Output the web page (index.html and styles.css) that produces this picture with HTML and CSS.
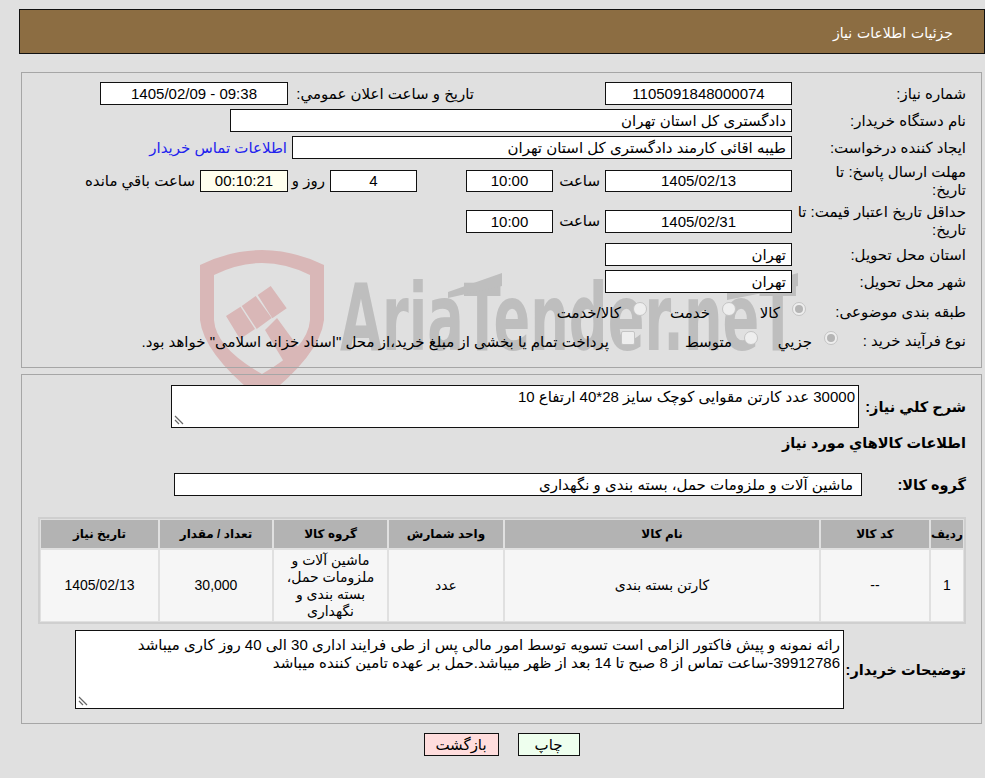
FILE: index.html
```html
<!DOCTYPE html>
<html lang="fa" dir="rtl">
<head>
<meta charset="utf-8">
<title>جزئیات اطلاعات نیاز</title>
<link rel="stylesheet" href="styles.css">
</head>
<body>
<div class="watermark" aria-hidden="true">
  <svg width="640" height="190" viewBox="190 240 640 190">
    <path class="shield" fill-rule="evenodd" d="M200 265 Q262 235 324 265 L324 320 Q320 355 262 400 Q204 355 200 320Z M214 275 Q262 251 310 275 L310 320 Q308 348 262 374 Q216 348 214 320Z"/>
    <path class="shield" d="M226 316 L240.500 306.700 L255 329 L240 339Z M241.700 306 L255.700 296 L271.700 318 L256.700 329Z M257.700 295 L270.700 286 L286.700 308.300 L272.300 318.300Z"/>
    <path class="shield" d="M265 330 L277 318 L304 355 L290 372Z"/>
    <text class="mark" transform="translate(340 350) scale(0.589 1)">AriaTender.neT</text>
    <path class="mark-bar" d="M448 292 L502 273 L502 286 L448 298Z M727 293 L798 273 L798 286 L727 300Z"/>
  </svg>
</div>
<header class="title-bar">جزئیات اطلاعات نیاز</header>
<section class="panel panel-info">
  <div class="row r1">
    <div class="label">شماره نیاز:</div>
    <div class="box w-date">1105091848000074</div>
    <div class="mid">تاریخ و ساعت اعلان عمومي:</div>
    <div class="box w-date2">09:38 - 1405/02/09</div>
  </div>
  <div class="row r1">
    <div class="label">نام دستگاه خریدار:</div>
    <div class="box start w-buyer">دادگستری کل استان تهران</div>
  </div>
  <div class="row r1">
    <div class="label">ایجاد کننده درخواست:</div>
    <div class="box start w-creator">طیبه اقائی کارمند دادگستری کل استان تهران</div>
    <a class="contact" href="#">اطلاعات تماس خریدار</a>
  </div>
  <div class="row r2 first-tall">
    <div class="label">مهلت ارسال پاسخ: تا<br>تاریخ:</div>
    <div class="box w-date h22">1405/02/13</div>
    <div class="unit">ساعت</div>
    <div class="box w-time h22">10:00</div>
    <div class="box w-day h22">4</div>
    <div class="unit-day">روز و</div>
    <div class="box w-timer h22 timer">00:10:21</div>
    <div class="unit-left">ساعت باقي مانده</div>
  </div>
  <div class="row r2">
    <div class="label">حداقل تاریخ اعتبار قیمت: تا<br>تاریخ:</div>
    <div class="box w-date">1405/02/31</div>
    <div class="unit">ساعت</div>
    <div class="box w-time">10:00</div>
  </div>
  <div class="row r1 after-tall">
    <div class="label">استان محل تحویل:</div>
    <div class="box start w-date">تهران</div>
  </div>
  <div class="row r1">
    <div class="label">شهر محل تحویل:</div>
    <div class="box start w-date">تهران</div>
  </div>
  <div class="row r3 r3-first">
    <div class="label l-subject">طبقه بندی موضوعی:</div>
    <span class="radio on"></span><span class="opt o-a">کالا</span>
    <span class="radio"></span><span class="opt o-b">خدمت</span>
    <span class="radio"></span><span class="opt">کالا/خدمت</span>
  </div>
  <div class="row r3">
    <div class="label l-process">نوع فرآیند خرید :</div>
    <span class="radio on"></span><span class="opt o-d">جزيي</span>
    <span class="radio"></span><span class="opt o-e">متوسط</span>
    <span class="check"></span><span class="opt">پرداخت تمام یا بخشی از مبلغ خرید،از محل "اسناد خزانه اسلامی" خواهد بود.</span>
  </div>
</section>
<section class="panel panel-items">
  <div class="row desc">
    <div class="label-b w-desc">شرح کلي نیاز:</div>
    <div class="area a-desc">30000 عدد کارتن مقوایی کوچک سایز 28*40 ارتفاع 10<svg class="grip" width="10" height="10" viewBox="0 0 10 10"><path d="M1 1 9 9M1 5 5 9" stroke="#666" stroke-width="1.2" fill="none"/></svg></div>
  </div>
  <h2 class="heading">اطلاعات کالاهاي مورد نیاز</h2>
  <div class="row group">
    <div class="label-b w-group">گروه کالا:</div>
    <div class="box start a-group">ماشین آلات و ملزومات حمل، بسته بندی و نگهداری</div>
  </div>
  <table class="items">
    <colgroup><col class="c1"><col class="c2"><col class="c3"><col class="c4"><col class="c5"><col class="c6"><col class="c7"></colgroup>
    <thead>
      <tr><th>ردیف</th><th>کد کالا</th><th>نام کالا</th><th>واحد شمارش</th><th>گروه کالا</th><th>تعداد / مقدار</th><th>تاریخ نیاز</th></tr>
    </thead>
    <tbody>
      <tr><td>1</td><td>--</td><td>کارتن بسته بندی</td><td>عدد</td><td>ماشین آلات و ملزومات حمل، بسته بندی و نگهداری</td><td>30,000</td><td>1405/02/13</td></tr>
    </tbody>
  </table>
  <div class="row notes">
    <div class="label-b w-notes">توضیحات خریدار:</div>
    <div class="area a-notes">رائه نمونه و پیش فاکتور الزامی است تسویه توسط امور مالی پس از طی فرایند اداری 30 الی 40 روز کاری میباشد<br>39912786-ساعت تماس از 8 صبح تا 14 بعد از ظهر میباشد.حمل بر عهده تامین کننده میباشد<svg class="grip" width="10" height="10" viewBox="0 0 10 10"><path d="M1 1 9 9M1 5 5 9" stroke="#666" stroke-width="1.2" fill="none"/></svg></div>
  </div>
</section>
<div class="actions">
  <button class="btn print" type="button">چاپ</button>
  <button class="btn back" type="button">بازگشت</button>
</div>
</body>
</html>
```
FILE: styles.css
```css
* { box-sizing: border-box; }
html, body { margin: 0; padding: 0; }
body {
  position: relative;
  width: 985px;
  height: 778px;
  overflow: hidden;
  background: #e0e0e0;
  color: #000;
  font: 15px/18px "Liberation Sans", "DejaVu Sans", sans-serif;
  direction: rtl;
}
.watermark { position: absolute; left: 190px; top: 240px; z-index: 0; }
.shield { fill: #d9b7b7; }
.mark { font: bold 92px "DejaVu Sans", sans-serif; fill: #bebebe; direction: ltr; unicode-bidi: bidi-override; text-anchor: start; }
.mark-bar { fill: #bebebe; }
.title-bar {
  position: relative;
  margin: 9px 0 0 19px;
  height: 45px;
  padding: 14px 31px 0 0;
  background: #8c6d42;
  border: 1px solid #111;
  color: #fff;
  font-size: 14px;
  word-spacing: 1px;
}
.panel {
  position: relative;
  margin: 0 3px 0 21px;
  border: 1px solid #a6a6a6;
  padding-right: 15px;
  padding-left: 15px;
}
.panel-info { margin-top: 18px; height: 296px; padding-top: 9px; }
.panel-items { margin-top: 6px; height: 350px; padding-top: 10px; }
.row { display: flex; align-items: center; }
.r1 { height: 23px; margin-bottom: 4px; }
.r2 { min-height: 38px; margin-bottom: 2px; }
.r3 { height: 29px; }
.r3-first { margin-top: 4px; }
.first-tall { margin-top: -1px; }
.after-tall { margin-top: 3px; }
.label { width: 174px; flex: none; }
.l-subject { width: 160px; }
.l-process { width: 128px; }
.box {
  background: #fff;
  border: 1px solid #111;
  height: 23px;
  line-height: 21px;
  text-align: center;
  flex: none;
  white-space: nowrap;
}
.h22 { height: 22px; line-height: 20px; }
.start { text-align: right; padding-right: 5px; }
.w-date { width: 187px; }
.w-date2 { width: 188px; }
.w-buyer { width: 562px; }
.w-creator { width: 500px; }
.w-time { width: 87px; }
.w-day { width: 87px; margin-right: 49px; }
.w-timer { width: 88px; }
.timer { background: #ffffee; }
.mid { width: 317px; padding-right: 131px; white-space: nowrap; }
.contact { margin-right: 5px; color: #2222ee; text-decoration: none; white-space: nowrap; }
.unit { width: 52px; padding-right: 5px; white-space: nowrap; }
.unit-day { width: 42px; padding-right: 5px; white-space: nowrap; }
.unit-left { padding-right: 5px; white-space: nowrap; }
.radio {
  flex: none;
  width: 14px;
  height: 14px;
  border-radius: 50%;
  border: 1px solid #c4c4c4;
  background: #eee;
  position: relative;
  margin-top: -6px;
}
.radio.on::after {
  content: "";
  position: absolute;
  left: 2px;
  top: 2px;
  width: 8px;
  height: 8px;
  border-radius: 50%;
  background: #b5b5b5;
}
.check {
  flex: none;
  width: 14px;
  height: 14px;
  background: #eee;
  border: 1px solid #c4c4c4;
  border-radius: 2px;
  margin-top: -6px;
}
.opt { margin-right: 12px; margin-top: 2px; white-space: nowrap; position: relative; }
.o-a { width: 44px; }
.o-b { width: 63px; }
.o-d { width: 54px; }
.o-e { width: 97px; }
.label-b { font-weight: bold; font-size: 14.5px; flex: none; white-space: nowrap; }
.area {
  position: relative;
  background: #fff;
  border: 1px solid #111;
  flex: none;
  padding: 2px 3px;
}
.grip { position: absolute; left: 2px; bottom: 2px; }
.desc { height: 43px; }
.w-desc { width: 107px; }
.a-desc { width: 688px; height: 43px; }
.heading { margin: 4px 0 0; height: 23px; font-size: 14.5px; line-height: 23px; font-weight: bold; }
.group { margin-top: 18px; height: 23px; }
.w-group { width: 104px; }
.a-group { width: 688px; padding-right: 8px; }
.items {
  width: 928px;
  margin: 21px 0 0;
  border: 1px solid #cfcfcf;
  box-shadow: inset 0 0 0 1px #cfcfcf;
  border-spacing: 2px;
  border-collapse: separate;
  table-layout: fixed;
  font-size: 14px;
  text-align: center;
}
.c1 { width: 32px; }
.c2 { width: 108px; }
.c3 { width: 314px; }
.c4 { width: 114px; }
.c5 { width: 113px; }
.c6 { width: 112px; }
.c7 { width: 117px; }
.items th { height: 28px; padding: 0; background: #b3b3b3; font-size: 12px; }
.items td { height: 71px; padding: 0 8px; background: #f6f6f6; line-height: 17px; }
.notes { margin-top: 6px; height: 79px; }
.w-notes { width: 122px; }
.a-notes { width: 769px; height: 79px; padding: 5px 3px 0; line-height: 18px; white-space: nowrap; }
.actions { position: relative; display: flex; justify-content: center; gap: 19px; margin: 9px 0 0 18px; }
.btn {
  height: 23px;
  border: 1px solid #111;
  padding: 0;
  font: inherit;
  color: inherit;
}
.print { width: 62px; background: #eeffee; }
.back { width: 75px; background: #ffdddd; }
```
